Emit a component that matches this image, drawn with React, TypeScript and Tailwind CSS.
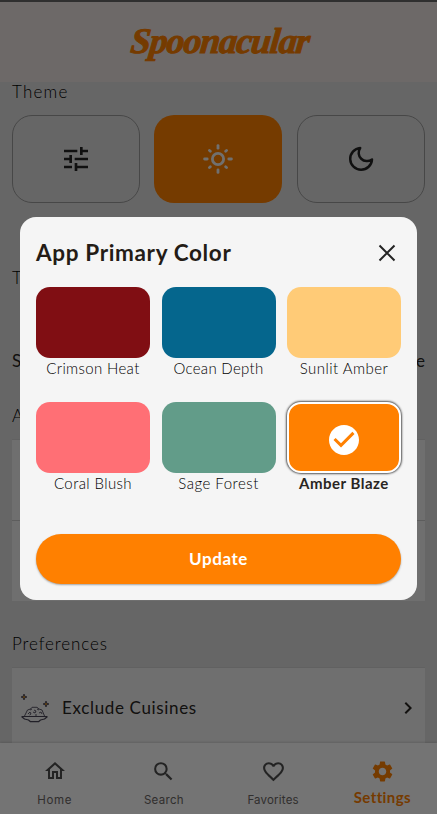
import React from "react";
import { MdTune, MdOutlineHome, MdSearch, MdFavoriteBorder, MdSettings, MdChevronRight, MdCheckCircle } from "react-icons/md";

const swatches = [
  { name: "Crimson Heat", color: "bg-[#800e13]", label: "tracking-[0.35px]" },
  { name: "Ocean Depth", color: "bg-[#05668d]", label: "tracking-[0.3px]" },
  { name: "Sunlit Amber", color: "bg-[#ffcb77]", label: "tracking-[0.45px]" },
  { name: "Coral Blush", color: "bg-[#ff6f75]", label: "tracking-[0.4px]" },
  { name: "Sage Forest", color: "bg-[#629c89]", label: "tracking-[0.5px]" },
  { name: "Amber Blaze", color: "bg-[#ff8000]", label: "tracking-[0.5px]", selected: true },
];

function SunIcon() {
  return (
    <svg width="32" height="32" viewBox="0 0 32 32" fill="none" stroke="#f5f5f5" strokeWidth="2.8" strokeLinecap="round">
      <circle cx="16" cy="16" r="5.6" />
      {[0, 45, 90, 135, 180, 225, 270, 315].map((a) => (
        <path key={a} d={a % 90 === 0 ? "M16 2.600v2.600" : "M16 3.800v1.400"} transform={`rotate(${a} 16 16)`} />
      ))}
    </svg>
  );
}

function MoonIcon() {
  return (
    <svg width="28" height="28" viewBox="0 0 28 28" fill="none" stroke="#242424" strokeWidth="2.5" strokeLinejoin="round">
      <path d="M13.200 3A10.900 10.900 0 1 0 25 14.400A8.300 8.300 0 0 1 13.200 3Z" />
    </svg>
  );
}

function DishIcon() {
  return (
    <svg width="30" height="32" viewBox="0 0 30 32" fill="none" stroke="#5b5868" strokeWidth="1" strokeLinejoin="round">
      <path d="M1.500 24.500h26M1.500 24.500l3 2.500 4 1 2 1.700h8l2-1.700 4-1 3-2.500" stroke="#484555" strokeWidth="1.2" />
      <path d="M4.500 24l3-6 3-1 1.500-1.700h5l2 1.700 3 1 2.500 6" />
      <path d="M8 22l2-2 1 2-1.500 1M14 18l2 1-1 2-2-1M19 21l2-1 1 2M12 17l-2 1M17 17l2 1M15 23h2" />
      <path d="M4 2l.8 2.200 2.200.8-2.200.8L4 8l-.8-2.200L1 5l2.200-.8zM26 9l.8 2.200 2.200.8-2.200.8L26 15l-.8-2.200L23 12l2.200-.8z" fill="#d58b1b" />
    </svg>
  );
}

function CloseIcon() {
  return (
    <svg width="28" height="28" viewBox="0 0 28 28" stroke="#242424" strokeWidth="2">
      <path d="M6.500 6.500l15 15M21.500 6.500l-15 15" />
    </svg>
  );
}

function ThemeCard({ active, children }: { active?: boolean; children: React.ReactNode }) {
  return (
    <div className={active ? "mr-px -ml-px flex items-center justify-center rounded-[20px] bg-[#ff8000]" : "flex items-center justify-center rounded-[20px] border border-[#9b9b9b]"}>
      {children}
    </div>
  );
}

export default function App() {
  return (
    <div className="relative flex h-[814px] w-full flex-col overflow-hidden bg-[#dfdfdf] font-['Lato',sans-serif] text-[#292522]">
      <header className="flex h-[82px] shrink-0 items-center justify-center border-t-2 border-[#666] bg-[#eee5e2]">
        <h1 className="-translate-y-px translate-x-px -skew-x-6 font-['Liberation_Serif',serif] text-[36px] font-bold italic leading-none tracking-[-1.1px] text-[#ff8000] [-webkit-text-stroke:1px_#ff8000]">Spoonacular</h1>
      </header>

      <main className="flex min-h-0 flex-1 flex-col px-3">
        <h2 className="h-[33px] shrink-0 text-[17px] font-light leading-[19px] tracking-[1.2px] text-black">Theme</h2>
        <div className="grid h-[88px] shrink-0 grid-cols-3 gap-[14.5px]">
          <ThemeCard><MdTune size={32} color="#242424" /></ThemeCard>
          <ThemeCard active><SunIcon /></ThemeCard>
          <ThemeCard><MoonIcon /></ThemeCard>
        </div>
        <h2 className="mt-[64px] h-[84px] shrink-0 text-[17px] font-light leading-[21px] text-black">T</h2>
        <div className="flex h-[54px] shrink-0 justify-between text-[17px] leading-5"><span>S</span><span>e</span></div>
        <h2 className="h-[34px] shrink-0 text-[17px] font-light leading-[21px] text-black">A</h2>
        <div className="flex h-[162px] shrink-0 flex-col border-t border-[#d3d3d3] bg-[#f2f2f2]">
          <div className="h-[81px] shrink-0 border-b border-[#cbcbcb]" />
        </div>
        <h2 className="mt-8 h-[34px] shrink-0 text-[17px] font-light leading-[21px] tracking-[0.9px] text-black">Preferences</h2>
        <div className="flex h-[76px] shrink-0 items-center border-t border-[#d3d3d3] bg-[#f2f2f2] pl-2 pr-[5px] pt-1">
          <DishIcon />
          <span className="ml-3 flex-1 text-[17px] tracking-[0.65px]">Exclude Cuisines</span>
          <MdChevronRight size={24} />
        </div>
      </main>

      <nav className="grid h-[71px] shrink-0 grid-cols-4 bg-[#fcfcfc] font-['Inter',sans-serif] text-[11.5px] text-[#6b6664] shadow-[0_-1px_2px_#0002]">
        <div className="flex flex-col items-center pt-4"><MdOutlineHome size={24} color="#4e4e4e" /><span className="mt-[9px] tracking-[0.6px]">Home</span></div>
        <div className="flex flex-col items-center pt-4"><MdSearch size={25} color="#4e4e4e" /><span className="mt-2 tracking-[0.3px]">Search</span></div>
        <div className="flex flex-col items-center pt-4"><MdFavoriteBorder size={25} color="#4e4e4e" /><span className="mt-2 tracking-[0.2px]">Favorites</span></div>
        <div className="flex flex-col items-center pt-4 text-[#ff8000]"><MdSettings size={25} /><span className="mt-[3px] font-['Lato',sans-serif] text-[15px] font-bold leading-[21px] tracking-[0.4px]">Settings</span></div>
      </nav>

      <div className="absolute inset-0 bg-black/54" />

      <section className="absolute left-5 top-[217px] flex h-[383px] w-[397px] flex-col rounded-2xl bg-[#f5f5f5] px-4 pb-4 pt-[22px]">
        <div className="flex h-12 shrink-0 items-start justify-between">
          <h2 className="text-[22.5px] font-bold leading-[27px] tracking-[0.65px] text-[#241c16]">App Primary Color</h2>
          <CloseIcon />
        </div>
        <div className="grid grid-cols-[114px_114px_114px] justify-between">
          {swatches.map((s) => (
            <div key={s.name} className="flex h-[115px] flex-col items-center">
              {s.selected ? (
                <div className="flex h-[71px] w-full items-center justify-center rounded-[14px] border-2 border-white bg-[#ff8000] pt-1 shadow-[0_0_2px_1px_#555]">
                  <MdCheckCircle size={36} color="white" />
                </div>
              ) : (
                <div className={`h-[71px] w-full rounded-[14px] ${s.color}`} />
              )}
              <span className={`whitespace-nowrap ${s.label} ${s.selected ? "text-[15px] font-bold leading-[21px]" : "text-[15px] font-light leading-[21px] text-black"}`}>{s.name}</span>
            </div>
          ))}
        </div>
        <button className="mt-auto h-[50px] rounded-full bg-[#ff8000] text-[17px] font-bold tracking-[0.6px] text-white shadow-[0_1px_2px_#0005]">Update</button>
      </section>
    </div>
  );
}
